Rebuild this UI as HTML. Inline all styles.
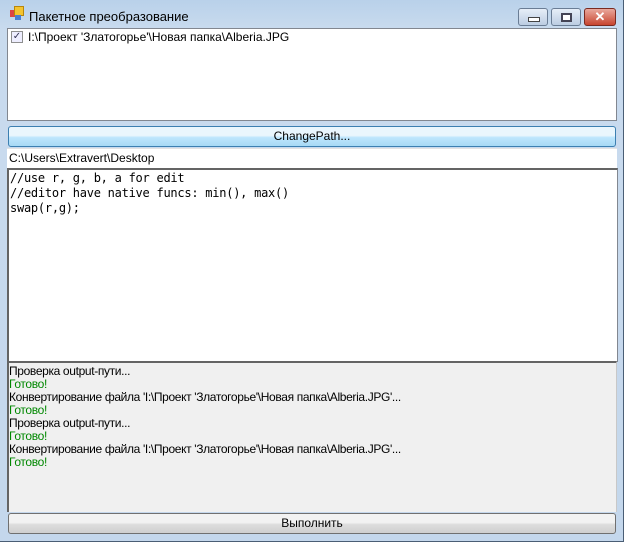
<!DOCTYPE html><html><head><style>
body{margin:0;width:629px;height:544px;overflow:hidden;background:#fff;font-family:"Liberation Sans",sans-serif;font-size:12px;position:relative}
.frame{position:absolute;left:0;top:0;width:623px;height:541px;background:linear-gradient(#b9d1ea,#c9dbee 30px,#c4d7ec);border-right:1px solid #4a5e75;border-bottom:1px solid #4a5e75}
.a{position:absolute}
.title{left:29px;top:9px;font-size:13px;color:#000}
.btn{border:1px solid #707070;border-radius:3px;text-align:center;line-height:19px;font-size:12px}
</style></head><body>
<div class="frame"></div>
<div class="a" style="left:10px;top:10px;width:7px;height:7px;background:#d44"></div>
<div class="a" style="left:14px;top:6px;width:8px;height:8px;background:#f4c430;border:1px solid #b8860b"></div>
<div class="a" style="left:15px;top:15px;width:6px;height:5px;background:#4a7fd0"></div>
<div class="a title">Пакетное преобразование</div>
<div class="a" style="left:518px;top:8px;width:28px;height:16px;border:1px solid #6a7d95;border-radius:3px;background:linear-gradient(#e6eef8,#bccde2)"><div class="a" style="left:9px;top:8px;width:10px;height:3px;background:#fff;border:1px solid #444"></div></div>
<div class="a" style="left:551px;top:8px;width:28px;height:16px;border:1px solid #6a7d95;border-radius:3px;background:linear-gradient(#e6eef8,#bccde2)"><div class="a" style="left:9px;top:4px;width:7px;height:5px;border:2px solid #445;background:#fff"></div></div>
<div class="a" style="left:584px;top:8px;width:30px;height:16px;border:1px solid #7a2a20;border-radius:3px;background:linear-gradient(#e9a89c,#c8452f);color:#fff;font-weight:bold;text-align:center;line-height:16px;font-size:13px">✕</div>
<div class="a" style="left:7px;top:28px;width:608px;height:91px;background:#fff;border:1px solid #828790"></div>
<div class="a" style="left:11px;top:31px;width:10px;height:10px;border:1px solid #8e8f8f;background:#eef;font-size:10px;line-height:10px;text-align:center;color:#335">✓</div>
<div class="a" style="left:28px;top:30px">I:\Проект 'Златогорье'\Новая папка\Alberia.JPG</div>
<div class="a btn" style="left:8px;top:126px;width:606px;height:19px;border-color:#3c7fb1;background:linear-gradient(#eaf6fd 45%,#bee6fd 55%,#a7d9f5)">ChangePath...</div>
<div class="a" style="left:7px;top:148px;width:610px;height:20px;background:#fff;border-top:1px solid #e3e3e3"></div>
<div class="a" style="left:9px;top:151px">C:\Users\Extravert\Desktop</div>
<div class="a" style="left:7px;top:168px;width:608px;height:191px;background:#fff;border:1px solid #828790;border-top:2px solid #646464;border-left:2px solid #646464"></div>
<pre class="a" style="left:10px;top:171px;margin:0;font-family:'DejaVu Sans Mono','Liberation Mono',monospace;font-size:12px;line-height:15px;letter-spacing:-0.25px">//use r, g, b, a for edit
//editor have native funcs: min(), max()
swap(r,g);</pre>
<div class="a" style="left:7px;top:361px;width:607px;height:149px;background:#f0f0f0;border-top:2px solid #646464;border-left:2px solid #646464;border-right:1px solid #c8c8c8"></div>
<div class="a" style="left:9px;top:365px;line-height:13px;font-size:12px;letter-spacing:-0.35px">
Проверка output-пути...<br><span style="color:#080">Готово!</span><br>Конвертирование файла 'I:\Проект 'Златогорье'\Новая папка\Alberia.JPG'...<br><span style="color:#080">Готово!</span><br>Проверка output-пути...<br><span style="color:#080">Готово!</span><br>Конвертирование файла 'I:\Проект 'Златогорье'\Новая папка\Alberia.JPG'...<br><span style="color:#080">Готово!</span></div>
<div class="a btn" style="left:8px;top:513px;width:606px;height:19px;background:linear-gradient(#f2f2f2 45%,#dddddd 55%,#cfcfcf)">Выполнить</div>
</body></html>
